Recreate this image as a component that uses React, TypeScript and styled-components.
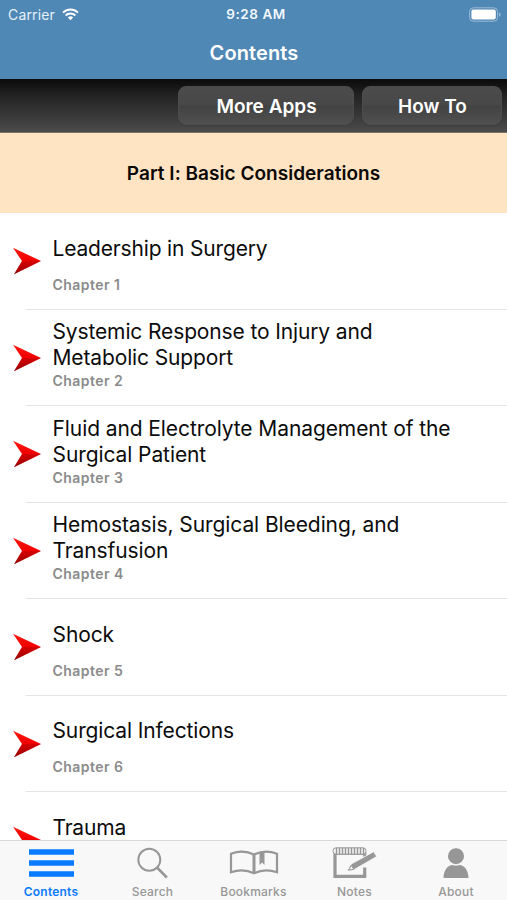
import React from "react";
import styled, { createGlobalStyle } from "styled-components";

const GlobalStyle = createGlobalStyle`
  * { box-sizing: border-box; }
  html, body { margin: 0; padding: 0; background: #fff; }
  body { font-family: Inter, "Liberation Sans", sans-serif; overflow: hidden; }
`;

const Screen = styled.div`
  width: 507px;
  height: 900px;
  display: flex;
  flex-direction: column;
  overflow: hidden;
  background: #fff;
`;

const Header = styled.header`
  flex: none;
  height: 79px;
  background: #4f87b5;
  color: #fff;
`;

const StatusBar = styled.div`
  height: 27px;
  padding: 0 6px 0 8px;
  display: grid;
  grid-template-columns: 1fr auto 1fr;
  align-items: center;
  font-size: 14px;
  line-height: 27px;
`;

const Carrier = styled.div`
  display: flex;
  align-items: center;
  gap: 7px;
  color: #e6f1fa;
  letter-spacing: 0.15px;
`;

const Clock = styled.div`
  padding: 1px 0 0 3px;
  font-size: 13.5px;
  font-weight: 600;
  letter-spacing: 0.55px;
  color: #f2f8fc;
`;

const BatterySlot = styled.div`
  display: flex;
  justify-content: flex-end;
`;

const PageTitle = styled.h1`
  margin: 0;
  height: 52px;
  padding-left: 1px;
  font-size: 20px;
  font-weight: 600;
  line-height: 52px;
  text-align: center;
  letter-spacing: 0.1px;
`;

const Toolbar = styled.div`
  flex: none;
  height: 54px;
  padding: 7px 5px 0 0;
  display: flex;
  justify-content: flex-end;
  gap: 8px;
  background: linear-gradient(#0b0b0b, #222 30%, #333 60%, #4a4a4a 98%);
  border-bottom: 1px solid #77716a;
`;

const ToolButton = styled.button<{ $width: number }>`
  width: ${(p) => p.$width}px;
  height: 39px;
  padding: 2px 0 0 1px;
  border: 1px solid #4c4c4c;
  border-radius: 8px;
  background: linear-gradient(#4b4b4b, #484848 49%, #424242 51%, #505050);
  box-shadow: 0 0 1px #222;
  color: #fff;
  font: 600 19px Inter, sans-serif;
`;

const SectionHeader = styled.h2`
  flex: none;
  margin: 0;
  height: 80px;
  background: #ffe4c4;
  color: #0b0906;
  font-size: 19px;
  font-weight: 600;
  line-height: 82px;
  letter-spacing: 0.03px;
  text-align: center;
`;

const ChapterList = styled.ul`
  flex: 1;
  min-height: 0;
  margin: 0;
  padding: 0;
  overflow: hidden;
  list-style: none;
`;

const ChapterRow = styled.li`
  height: 96.55px;
  padding-left: 12px;
  display: flex;
  background: linear-gradient(#e4e4e5, #e4e4e5) 26px 100% / 100% 1px no-repeat;
`;

const ArrowSlot = styled.div`
  width: 40.5px;
  padding-top: 34px;
`;

const ChapterText = styled.div`
  padding-top: 9.6px;
`;

const ChapterTitle = styled.div<{ $spacing?: number }>`
  height: 52px;
  display: flex;
  align-items: center;
  color: #0c0c0c;
  font-size: 21px;
  line-height: 26px;
  letter-spacing: ${(p) => p.$spacing ?? -0.09}px;
  white-space: pre-line;
`;

const ChapterNumber = styled.div`
  color: #8b8b8b;
  font-size: 14px;
  font-weight: 600;
  line-height: 20px;
  letter-spacing: 0.45px;
`;

const TabBar = styled.nav`
  flex: none;
  height: 60px;
  display: grid;
  grid-template-columns: 102px 101px 101px 101px 102px;
  background: #f8f8f8;
  border-top: 1px solid #d8d8d8;
`;

const Tab = styled.a<{ $active?: boolean }>`
  display: flex;
  flex-direction: column;
  align-items: center;
  color: ${(p) => (p.$active ? "#0a7aff" : "#979797")};
  font-size: 12px;
  font-weight: ${(p) => (p.$active ? 600 : 500)};
  line-height: 16px;
  letter-spacing: 0.2px;

  svg { display: block; }
`;

const TabIcon = styled.div`
  height: 43px;
  padding-top: 3px;
`;

const WifiIcon = () => (
  <svg width="17" height="13" viewBox="0 0 17 13" fill="none" stroke="#fff" strokeWidth="2">
    <path d="M1 4.6a10.7 10.7 0 0 1 15 0M3.6 7.5a7 7 0 0 1 9.8 0" />
    <path d="M8.5 12.2 5.8 9.5a3.9 3.9 0 0 1 5.4 0z" fill="#fff" stroke="none" />
  </svg>
);

const BatteryIcon = () => (
  <svg width="32" height="15" viewBox="0 0 32 15">
    <rect x=".6" y=".8" width="28" height="13.4" rx="3.8" fill="none" stroke="#9bbad3" />
    <rect x="2.4" y="2.6" width="24.4" height="9.8" rx="1.8" fill="#fff" />
    <path d="M30 5.2q3.3 2.3 0 4.6z" fill="#9bbad3" />
  </svg>
);

const ArrowIcon = ({ id }: { id: string }) => (
  <svg width="30" height="30" viewBox="0 0 30 30">
    <defs>
      <linearGradient id={id} x1="0" y1="0" x2="0" y2="1">
        <stop offset="0" stopColor="#ff1a10" />
        <stop offset=".48" stopColor="#f00000" />
        <stop offset="1" stopColor="#8c0000" />
      </linearGradient>
    </defs>
    <path d="M1 0.8 29 14 2 27.3 10 14z" fill={`url(#${id})`} />
    <path d="m10 14 19 0L2 27.3z" fill="#a90000" opacity=".3" />
  </svg>
);

const ContentsIcon = () => (
  <svg width="46" height="36" viewBox="0 0 46 36" fill="currentColor">
    <path d="M1 5.2h45v5.6H1zM1 16.2h45v5.6H1zM1 27.2h45v5.6H1z" />
  </svg>
);

const SearchIcon = () => (
  <svg width="32" height="36" viewBox="0 0 32 36" fill="none" stroke="currentColor">
    <circle cx="12.3" cy="15.8" r="11" strokeWidth="2" />
    <path d="m20 23.5 9.800 10" strokeWidth="2.6" />
  </svg>
);

const BookIcon = () => (
  <svg width="50" height="36" viewBox="0 0 50 36" fill="none" stroke="currentColor" strokeWidth="2.2">
    <path d="M25 10.5Q14 5.2 2 9.7v18.6q12-4.3 23 1 11-5.3 23-1V9.7Q36 5.2 25 10.5z" />
    <path d="M25 10v19" strokeWidth="3" />
    <path d="M30.5 8h5v13l-2.5-2.6-2.5 2.6z" fill="currentColor" stroke="none" />
  </svg>
);

const NotesIcon = () => (
  <svg width="46" height="36" viewBox="0 0 46 36" fill="none" stroke="currentColor">
    <path d="M32.700 23.500v8.800H3V9.500h29.700v3.200" strokeWidth="3.200" />
    <rect x="1" y="3.800" width="33" height="6.400" rx="3" fill="#f8f8f8" strokeWidth="1" />
    <path d="M4.500 4v6m3-6v6m3-6v6m3-6v6m3-6v6m3-6v6m3-6v6m3-6v6m3-6v6m3-6v6" strokeWidth="1.500" />
    <path d="m19.300 20 22.400-12.300 3 4.800-22 12.800-7.700 1.700z" fill="currentColor" stroke="#f8f8f8" strokeWidth=".8" />
    <path d="m19.300 21.500 2.600 3.800-5.300.9z" fill="#f8f8f8" strokeWidth="1" />
  </svg>
);

const PersonIcon = () => (
  <svg width="28" height="36" viewBox="0 0 28 36" fill="currentColor">
    <circle cx="14" cy="12.2" r="8" />
    <path d="M1.500 34c0-8 4.600-13.100 9-13.100 2 .9 5 .9 7 0 4.400 0 9 5.100 9 13.100z" />
  </svg>
);

const chapters: { title: string; spacing?: number }[] = [
  { title: "Leadership in Surgery", spacing: -0.17 },
  { title: "Systemic Response to Injury and\nMetabolic Support", spacing: -0.13 },
  { title: "Fluid and Electrolyte Management of the\nSurgical Patient" },
  { title: "Hemostasis, Surgical Bleeding, and\nTransfusion" },
  { title: "Shock" },
  { title: "Surgical Infections", spacing: -0.13 },
  { title: "Trauma", spacing: -0.2 },
];

const tabs = [
  { label: "Contents", Icon: ContentsIcon, active: true },
  { label: "Search", Icon: SearchIcon },
  { label: "Bookmarks", Icon: BookIcon },
  { label: "Notes", Icon: NotesIcon },
  { label: "About", Icon: PersonIcon },
];

export default function App() {
  return (
    <>
      <GlobalStyle />
      <Screen>
        <Header>
          <StatusBar>
            <Carrier>
              Carrier
              <WifiIcon />
            </Carrier>
            <Clock>9:28 AM</Clock>
            <BatterySlot>
              <BatteryIcon />
            </BatterySlot>
          </StatusBar>
          <PageTitle>Contents</PageTitle>
        </Header>
        <Toolbar>
          <ToolButton $width={176}>More Apps</ToolButton>
          <ToolButton $width={140}>How To</ToolButton>
        </Toolbar>
        <SectionHeader>Part I: Basic Considerations</SectionHeader>
        <ChapterList>
          {chapters.map((chapter, i) => (
            <ChapterRow key={chapter.title}>
              <ArrowSlot>
                <ArrowIcon id={`arrow-${i}`} />
              </ArrowSlot>
              <ChapterText>
                <ChapterTitle $spacing={chapter.spacing}>{chapter.title}</ChapterTitle>
                {i < 6 && <ChapterNumber>Chapter {i + 1}</ChapterNumber>}
              </ChapterText>
            </ChapterRow>
          ))}
        </ChapterList>
        <TabBar>
          {tabs.map(({ label, Icon, active }) => (
            <Tab key={label} $active={active}>
              <TabIcon>
                <Icon />
              </TabIcon>
              {label}
            </Tab>
          ))}
        </TabBar>
      </Screen>
    </>
  );
}
